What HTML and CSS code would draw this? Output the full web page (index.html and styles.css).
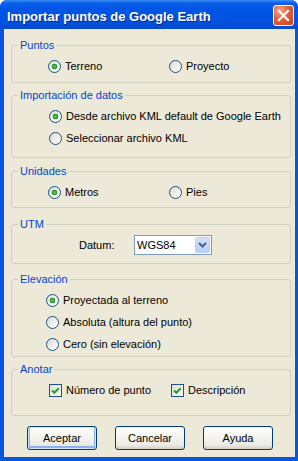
FILE: index.html
```html
<!DOCTYPE html>
<html lang="es">
<head>
    <meta charset="UTF-8">
    <meta name="viewport" content="width=device-width, initial-scale=1.0">
    <title>Importar puntos de Google Earth</title>
    <link rel="stylesheet" href="styles.css">
</head>
<body>

    <div class="window">
        <div class="titlebar">
            <span class="title">Importar puntos de Google Earth</span>
            <span class="close">
                <svg width="19" height="19" viewBox="0 0 19 19">
                    <path d="M5 5L14 14M14 5L5 14" stroke="#fff" stroke-width="2.2" stroke-linecap="square"/>
                </svg>
            </span>
        </div>

        <div class="client">
            <fieldset class="group group-puntos">
                <legend>Puntos</legend>
                <div class="options two-cols">
                    <label class="option"><span class="radio checked"></span>Terreno</label>
                    <label class="option"><span class="radio"></span>Proyecto</label>
                </div>
            </fieldset>

            <fieldset class="group group-datos">
                <legend>Importación de datos</legend>
                <div class="options">
                    <label class="option"><span class="radio checked"></span>Desde archivo KML default de Google Earth</label>
                    <label class="option"><span class="radio"></span>Seleccionar archivo KML</label>
                </div>
            </fieldset>

            <fieldset class="group group-unidades">
                <legend>Unidades</legend>
                <div class="options two-cols">
                    <label class="option"><span class="radio checked"></span>Metros</label>
                    <label class="option"><span class="radio"></span>Pies</label>
                </div>
            </fieldset>

            <fieldset class="group group-utm">
                <legend>UTM</legend>
                <div class="datum">
                    <span class="datum-label">Datum:</span>
                    <div class="combo">
                        <span class="combo-value">WGS84</span>
                        <span class="combo-btn">
                            <svg width="9" height="6" viewBox="0 0 9 6">
                                <path d="M1 1L4.5 4.5L8 1" fill="none" stroke="#4D6185" stroke-width="2"/>
                            </svg>
                        </span>
                    </div>
                </div>
            </fieldset>

            <fieldset class="group group-elevacion">
                <legend>Elevación</legend>
                <div class="options">
                    <label class="option"><span class="radio checked"></span>Proyectada al terreno</label>
                    <label class="option"><span class="radio"></span>Absoluta (altura del punto)</label>
                    <label class="option"><span class="radio"></span>Cero (sin elevación)</label>
                </div>
            </fieldset>

            <fieldset class="group group-anotar">
                <legend>Anotar</legend>
                <div class="options two-cols">
                    <label class="option">
                        <span class="check">
                            <svg width="11" height="11" viewBox="0 0 11 11">
                                <path d="M2 5.5L4.3 7.8L8.8 3.2" fill="none" stroke="#21A121" stroke-width="2"/>
                            </svg>
                        </span>Número de punto
                    </label>
                    <label class="option">
                        <span class="check">
                            <svg width="11" height="11" viewBox="0 0 11 11">
                                <path d="M2 5.5L4.3 7.8L8.8 3.2" fill="none" stroke="#21A121" stroke-width="2"/>
                            </svg>
                        </span>Descripción
                    </label>
                </div>
            </fieldset>

            <div class="buttons">
                <button class="btn btn-default">Aceptar</button>
                <button class="btn">Cancelar</button>
                <button class="btn">Ayuda</button>
            </div>
        </div>
    </div>

</body>
</html>
```

FILE: styles.css
```css
* {
    box-sizing: border-box;
}
html,
body {
    margin: 0;
}
body {
    width: 298px;
    height: 461px;
    font-family: "Liberation Sans", Arial, sans-serif;
    font-size: 11px;
    color: #000;
    background-color: #ffffff;
}
.window {
    width: 298px;
    height: 461px;
    display: flex;
    flex-direction: column;
    background-color: #0856de;
    border-radius: 7px 7px 0 0;
    overflow: hidden;
}
.titlebar {
    height: 29px;
    flex: none;
    display: flex;
    align-items: flex-start;
    padding: 0 4px 0 7px;
    background: linear-gradient(#3d8ef7 0, #0a60e8 3px, #0055e5 9px, #0153e0 20px, #0449cc 29px);
}
.title {
    flex: 1;
    margin-top: 10px;
    color: #ffffff;
    font-size: 13px;
    font-weight: bold;
    line-height: 13px;
    text-shadow: 1px 1px 0 #0b2a8f;
}
.close {
    width: 21px;
    height: 21px;
    margin-top: 5px;
    display: flex;
    align-items: center;
    justify-content: center;
    border: 1px solid #ffffff;
    border-radius: 3px;
    background: radial-gradient(circle at 30% 25%, #f4a48a 0, #e0603b 45%, #c8401a 100%);
}
.client {
    flex: 1;
    margin: 0 3px 4px 4px;
    padding: 10px 4px 0 7px;
    background-color: #ece9d8;
}
.group {
    margin: 0 0 8px;
    padding: 3px 0 0;
    min-width: 0;
    border: 1px solid #d0d0bf;
    border-radius: 3px;
}
.group legend {
    margin-left: 6px;
    padding: 0 2px;
    color: #0046d5;
    line-height: 13px;
}
.group-puntos {
    margin-bottom: 6px;
    padding-bottom: 5px;
}
.group-datos {
    margin-bottom: 7px;
    padding-bottom: 8px;
}
.group-unidades {
    margin-bottom: 10px;
    padding-bottom: 4px;
}
.group-utm {
    margin-bottom: 9px;
    padding-bottom: 7px;
}
.group-elevacion {
    margin-bottom: 6px;
    padding-bottom: 1px;
}
.group-anotar {
    margin-bottom: 10px;
    padding-bottom: 14px;
}
.options {
    display: flex;
    flex-direction: column;
    padding-left: 37px;
}
.options.two-cols {
    flex-direction: row;
    padding-left: 36px;
}
.two-cols .option:first-child {
    width: 121px;
}
.group-elevacion .options {
    padding-left: 34px;
}
.group-anotar .options {
    padding-left: 37px;
}
.group-anotar .option:first-child {
    width: 122px;
}
.option {
    display: flex;
    align-items: center;
    gap: 4px;
    height: 22px;
    white-space: nowrap;
}
.radio {
    flex: none;
    width: 13px;
    height: 13px;
    border: 1px solid #1c5180;
    border-radius: 50%;
    background: linear-gradient(135deg, #dcdcd7, #ffffff);
}
.radio.checked {
    background: radial-gradient(circle, #6ad36a 0, #2aa52a 1.8px, #1f8f1f 2.6px, transparent 3.1px),
                linear-gradient(135deg, #dcdcd7, #ffffff);
}
.check {
    flex: none;
    width: 13px;
    height: 13px;
    display: flex;
    border: 1px solid #1c5180;
    background: linear-gradient(135deg, #dcdcd7, #ffffff);
}
.datum {
    display: flex;
    align-items: center;
    height: 22px;
    padding-left: 67px;
}
.datum-label {
    width: 55px;
}
.combo {
    width: 78px;
    height: 20px;
    display: flex;
    align-items: center;
    padding: 1px;
    border: 1px solid #7f9db9;
    background-color: #ffffff;
}
.combo-value {
    flex: 1;
    padding-left: 1px;
}
.combo-btn {
    width: 15px;
    height: 16px;
    display: flex;
    align-items: center;
    justify-content: center;
    border: 1px solid #bccff7;
    border-radius: 2px;
    background: linear-gradient(#d4e1fc, #b9cdf7);
}
.buttons {
    display: flex;
    gap: 18px;
    padding-left: 16px;
}
.btn {
    width: 70px;
    height: 24px;
    padding: 0;
    border: 1px solid #003c74;
    border-radius: 3px;
    background: linear-gradient(#ffffff, #f4f3ee 45%, #ecebe6 80%, #d6d0c5);
    font: inherit;
    color: #000;
}
.btn-default {
    box-shadow: inset 0 0 0 1px #cee7ff, inset 0 -1px 0 2px #8fb0ea;
}
```
